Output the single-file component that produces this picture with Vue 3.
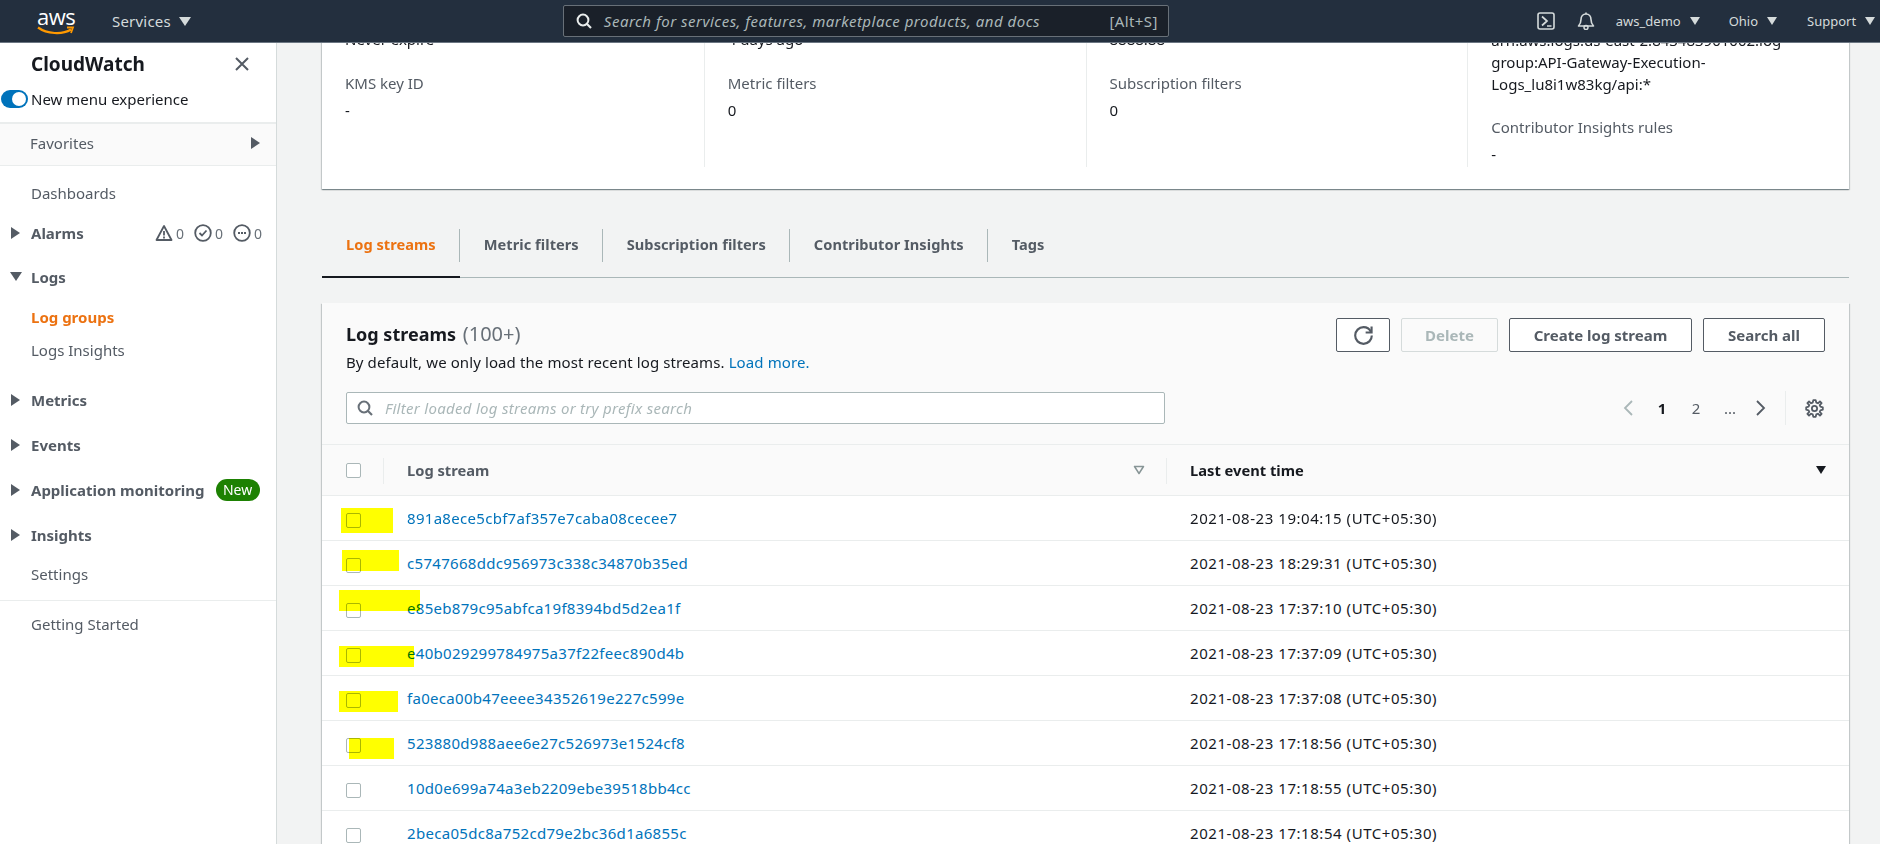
<script setup>
const navTop = ['Metrics', 'Events']

const rows = [
  { id: '891a8ece5cbf7af357e7caba08cecee7', time: '2021-08-23 19:04:15 (UTC+05:30)', mark: { left: 19, top: 12, width: 52, height: 25 } },
  { id: 'c5747668ddc956973c338c34870b35ed', time: '2021-08-23 18:29:31 (UTC+05:30)', mark: { left: 20, top: 9, width: 57, height: 21 } },
  { id: 'e85eb879c95abfca19f8394bd5d2ea1f', time: '2021-08-23 17:37:10 (UTC+05:30)', mark: { left: 17, top: 4, width: 81, height: 21 } },
  { id: 'e40b029299784975a37f22feec890d4b', time: '2021-08-23 17:37:09 (UTC+05:30)', mark: { left: 17, top: 15, width: 75, height: 21 } },
  { id: 'fa0eca00b47eeee34352619e227c599e', time: '2021-08-23 17:37:08 (UTC+05:30)', mark: { left: 17, top: 15, width: 59, height: 21 } },
  { id: '523880d988aee6e27c526973e1524cf8', time: '2021-08-23 17:18:56 (UTC+05:30)', mark: { left: 27, top: 17, width: 45, height: 21 } },
  { id: '10d0e699a74a3eb2209ebe39518bb4cc', time: '2021-08-23 17:18:55 (UTC+05:30)' },
  { id: '2beca05dc8a752cd79e2bc36d1a6855c', time: '2021-08-23 17:18:54 (UTC+05:30)' },
]

const tabs = ['Log streams', 'Metric filters', 'Subscription filters', 'Contributor Insights', 'Tags']

function markStyle(m) {
  return { left: m.left + 'px', top: m.top + 'px', width: m.width + 'px', height: m.height + 'px' }
}
</script>

<template>
  <div class="page">
    <!-- Top bar -->
    <header class="topbar">
      <div class="logo">
        <span class="logo-text">aws</span>
        <svg class="smile" viewBox="0 0 38 10" width="38" height="10">
          <path d="M1 1.5C10 8 25 9 34 3.5" fill="none" stroke="#f90" stroke-width="2.2" />
          <path d="M30 1.5h6l-2 5.5" fill="none" stroke="#f90" stroke-width="1.8" />
        </svg>
      </div>
      <span class="services">Services</span>
      <i class="tri-down nav-tri"></i>
      <div class="global-search">
        <svg viewBox="0 0 16 16" width="16" height="16" class="g-icon">
          <circle cx="7" cy="7" r="5.4" fill="none" stroke="#eaeded" stroke-width="2" />
          <path d="M11 11l4 4" stroke="#eaeded" stroke-width="2.2" />
        </svg>
        <span class="g-ph">Search for services, features, marketplace products, and docs</span>
        <span class="g-key">[Alt+S]</span>
      </div>
      <div class="top-right">
        <svg viewBox="0 0 18 18" width="18" height="18">
          <rect x="1" y="1" width="16" height="16" rx="2" fill="none" stroke="#d5dbdb" stroke-width="1.6" />
          <path d="M5 4.5l5 4.5-5 4.5" fill="none" stroke="#d5dbdb" stroke-width="1.7" />
          <path d="M10 14h4.5" stroke="#d5dbdb" stroke-width="1.5" />
        </svg>
        <svg class="bell" viewBox="0 0 18 18" width="18" height="18">
          <path d="M1.5 14h15c-2-2-2.500-3-2.500-6.500C14 4 12 2 9 2S4 4 4 7.500C4 11 3.500 12 1.500 14z" fill="none" stroke="#d5dbdb" stroke-width="1.6" stroke-linejoin="round" />
          <path d="M9 .5V2" stroke="#d5dbdb" stroke-width="1.6" />
          <circle cx="9" cy="15.500" r="2" fill="none" stroke="#d5dbdb" stroke-width="1.500" />
        </svg>
        <span class="tr-item acct">aws_demo</span><i class="tri-down nav-tri t1"></i>
        <span class="tr-item ohio">Ohio</span><i class="tri-down nav-tri t1"></i>
        <span class="tr-item supp">Support</span><i class="tri-down nav-tri t1"></i>
      </div>
    </header>

    <div class="body">
      <!-- Side navigation -->
      <aside class="sidenav">
        <div class="nav-head">
          <h2>CloudWatch</h2>
          <svg viewBox="0 0 16 16" width="16" height="16" class="close">
            <path d="M2 2l12 12M14 2L2 14" stroke="#545b64" stroke-width="2" />
          </svg>
        </div>
        <div class="toggle-row">
          <span class="toggle"><span class="knob"></span></span>
          <span>New menu experience</span>
        </div>
        <div class="favorites">
          <span>Favorites</span>
          <i class="tri-right"></i>
        </div>

        <a class="nav-link dash">Dashboards</a>
        <div class="nav-sec alarms">
          <i class="tri-right"></i>
          <b>Alarms</b>
          <div class="alarm-icons">
            <svg viewBox="0 0 18 18" width="18" height="18">
              <path d="M9 2L1.500 16h15z" fill="none" stroke="#545b64" stroke-width="1.800" stroke-linejoin="round" />
              <path d="M9 7v4.500M9 12.500v2" stroke="#545b64" stroke-width="1.800" />
            </svg>
            <span>0</span>
            <svg viewBox="0 0 18 18" width="18" height="18">
              <circle cx="9" cy="9" r="7.800" fill="none" stroke="#545b64" stroke-width="1.800" />
              <path d="M5.500 9l2.500 2.500 4.500-5" fill="none" stroke="#545b64" stroke-width="1.800" />
            </svg>
            <span>0</span>
            <svg viewBox="0 0 18 18" width="18" height="18">
              <circle cx="9" cy="9" r="7.800" fill="none" stroke="#545b64" stroke-width="1.800" />
              <path d="M5 9h2M8 9h2M11 9h2" stroke="#545b64" stroke-width="2" />
            </svg>
            <span>0</span>
          </div>
        </div>
        <div class="nav-sec">
          <i class="tri-down"></i>
          <b>Logs</b>
        </div>
        <a class="nav-sub active">Log groups</a>
        <a class="nav-sub">Logs Insights</a>
        <div v-for="(n, i) in navTop" :key="n" class="nav-sec" :class="{ gap: i === 0 }">
          <i class="tri-right"></i>
          <b>{{ n }}</b>
        </div>
        <div class="nav-sec">
          <i class="tri-right"></i>
          <b>Application monitoring</b>
          <span class="badge">New</span>
        </div>
        <div class="nav-sec">
          <i class="tri-right"></i>
          <b>Insights</b>
        </div>
        <a class="nav-link settings">Settings</a>
        <hr />
        <a class="nav-link started">Getting Started</a>
      </aside>

      <!-- Page content, scrolled down a little -->
      <main class="content">
        <section class="summary">
          <div class="col">
            <p class="val">Never expire</p>
            <p class="lbl">KMS key ID</p>
            <p class="val">-</p>
          </div>
          <div class="col">
            <p class="val">4 days ago</p>
            <p class="lbl">Metric filters</p>
            <p class="val">0</p>
          </div>
          <div class="col">
            <p class="val">8888.88</p>
            <p class="lbl">Subscription filters</p>
            <p class="val">0</p>
          </div>
          <div class="col arn">
            <p class="val">arn:aws:logs:us-east-2:843483901002:log-<br />group:API-Gateway-Execution-<br />Logs_lu8i1w83kg/api:*</p>
            <p class="lbl lbl-2">Contributor Insights rules</p>
            <p class="val">-</p>
          </div>
        </section>

        <nav class="tabs">
          <a v-for="(t, i) in tabs" :key="t" class="tab" :class="{ on: i === 0 }"><span>{{ t }}</span></a>
        </nav>

        <section class="table-card">
          <div class="tc-head">
            <div class="tc-top">
              <div>
                <h3>Log streams <span class="count">(100+)</span></h3>
                <p class="desc">By default, we only load the most recent log streams. <a>Load more.</a></p>
              </div>
              <div class="actions">
                <button class="btn icon-btn">
                  <svg viewBox="0 0 16 16" width="19" height="19">
                    <path d="M15 8a7 7 0 0 1-7 7 7 7 0 0 1-7-7 7 7 0 0 1 7-7c2.800 0 5.100 1.600 6.300 4" fill="none" stroke="#545b64" stroke-width="1.800" />
                    <path d="M14.800 .5v5h-5" fill="none" stroke="#545b64" stroke-width="1.800" />
                  </svg>
                </button>
                <button class="btn disabled">Delete</button>
                <button class="btn create">Create log stream</button>
                <button class="btn">Search all</button>
              </div>
            </div>
            <div class="tc-tools">
              <div class="filter">
                <svg viewBox="0 0 16 16" width="16" height="16">
                  <circle cx="7" cy="7" r="5.400" fill="none" stroke="#687078" stroke-width="2" />
                  <path d="M11 11l4 4" stroke="#687078" stroke-width="2.200" />
                </svg>
                <span>Filter loaded log streams or try prefix search</span>
              </div>
              <div class="pager">
                <svg viewBox="0 0 12 18" width="12" height="18">
                  <path d="M10 2L3 9l7 7" fill="none" stroke="#aab7b8" stroke-width="1.800" />
                </svg>
                <b class="pg cur">1</b>
                <span class="pg">2</span>
                <span class="pg dots">...</span>
                <svg viewBox="0 0 12 18" width="12" height="18">
                  <path d="M2 2l7 7-7 7" fill="none" stroke="#545b64" stroke-width="1.800" />
                </svg>
                <span class="pg-sep"></span>
                <svg viewBox="0 0 16 16" width="19" height="19">
                  <path d="M7 1H9L9.500 3L10.900 3.600L12.600 2L14 3.400L12.400 5.100L13 6.500L15 7V9L13 9.500L12.400 10.900L14 12.600L12.600 14L10.900 12.400L9.500 13L9 15H7L6.500 13L5.100 12.400L3.400 14L2 12.600L3.600 10.900L3 9.500L1 9V7L3 6.500L3.600 5.100L2 3.400L3.400 2L5.100 3.600L6.500 3Z" fill="none" stroke="#545b64" stroke-width="1.500" stroke-linejoin="round" />
                  <circle cx="8" cy="8" r="2.200" fill="none" stroke="#545b64" stroke-width="1.500" />
                </svg>
              </div>
            </div>
          </div>

          <div class="thead">
            <div class="c-check"><span class="box"></span><span class="th-sep"></span></div>
            <div class="c-name th">
              Log stream
              <svg viewBox="0 0 12 10" width="12" height="10" class="sort">
                <path d="M1.500 1.500h9L6 8.500z" fill="none" stroke="#879596" stroke-width="1.500" stroke-linejoin="round" />
              </svg>
            </div>
            <div class="c-time th">
              Last event time
              <i class="tri-down sort-on"></i>
            </div>
          </div>

          <div v-for="r in rows" :key="r.id" class="row">
            <div class="c-check"><span class="box"></span></div>
            <div class="c-name"><a>{{ r.id }}</a></div>
            <div class="c-time">{{ r.time }}</div>
            <span v-if="r.mark" class="mark" :style="markStyle(r.mark)"></span>
          </div>
        </section>
      </main>
    </div>
  </div>
</template>

<style>
html, body {
  margin: 0;
  overflow: hidden;
}
</style>

<style scoped>
* {
  box-sizing: border-box;
}

.page {
  width: 1880px;
  height: 844px;
  overflow: hidden;
  font-family: "Noto Sans", "Open Sans", sans-serif;
  font-size: 15px;
  color: #16191f;
  background: #f2f3f3;
  display: flex;
  flex-direction: column;
}

/* triangles */
.tri-down {
  display: inline-block;
  width: 0;
  height: 0;
  border-left: 6px solid transparent;
  border-right: 6px solid transparent;
  border-top: 9px solid #545b64;
}
.tri-right {
  display: inline-block;
  width: 0;
  height: 0;
  border-top: 6px solid transparent;
  border-bottom: 6px solid transparent;
  border-left: 9px solid #545b64;
}

/* top bar */
.topbar {
  height: 43px;
  flex: none;
  background: #232f3e;
  border-bottom: 1px solid #6b7682;
  display: flex;
  align-items: center;
  color: #d5dbdb;
  position: relative;
  z-index: 2;
}
.logo {
  margin-left: 37px;
  width: 38px;
  height: 30px;
  flex: none;
  position: relative;
}
.logo-text {
  position: absolute;
  top: -3px;
  left: 0;
  font-family: "Open Sans", sans-serif;
  font-size: 22px;
  line-height: 26px;
  color: #fff;
  letter-spacing: -.5px;
}
.smile {
  position: absolute;
  left: 0;
  top: 20px;
}
.services {
  margin-left: 37px;
  letter-spacing: .2px;
}
.nav-tri {
  margin-left: 8px;
  border-top-color: #d5dbdb;
}
.global-search {
  margin-left: 372px;
  width: 606px;
  height: 32px;
  flex: none;
  background: #1a2029;
  border: 1px solid #687078;
  border-radius: 2px;
  display: flex;
  align-items: center;
  padding: 0 10px 0 12px;
}
.g-ph {
  margin-left: 12px;
  font-style: italic;
  color: #aab7b8;
  flex: 1;
  letter-spacing: .5px;
}
.g-key {
  color: #aab7b8;
  letter-spacing: .4px;
}
.top-right {
  margin-left: 368px;
  flex: none;
  display: flex;
  align-items: center;
}
.bell {
  margin-left: 22px;
}
.tr-item {
  font-size: 13px;
}
.acct {
  margin-left: 21px;
}
.ohio {
  margin-left: 29px;
}
.supp {
  margin-left: 30px;
}
.t1 {
  margin-left: 9px;
  border-left-width: 5px;
  border-right-width: 5px;
  border-top-width: 8px;
}

.body {
  flex: 1;
  display: flex;
  min-height: 0;
}

/* side navigation */
.sidenav {
  width: 277px;
  flex: none;
  background: #fff;
  border-right: 1px solid #d5dbdb;
  color: #545b64;
}
.nav-head {
  height: 38px;
  padding: 4px 26px 0 31px;
  display: flex;
  align-items: center;
  justify-content: space-between;
}
.nav-head h2 {
  margin: 0;
  font-size: 19px;
  font-weight: 700;
  color: #16191f;
}
.toggle-row {
  height: 41px;
  padding: 0 0 6px 1px;
  display: flex;
  align-items: center;
  gap: 3px;
  color: #16191f;
}
.toggle {
  width: 27px;
  height: 18px;
  border-radius: 9px;
  background: #0073bb;
  position: relative;
}
.knob {
  position: absolute;
  left: 11px;
  top: 2px;
  width: 14px;
  height: 14px;
  border-radius: 50%;
  background: #fff;
}
.favorites {
  height: 44px;
  background: #fafafa;
  border-top: 2px solid #eaeded;
  border-bottom: 1px solid #eaeded;
  padding: 0 16px 4px 30px;
  display: flex;
  align-items: center;
  justify-content: space-between;
}
.nav-link,
.nav-sub {
  display: flex;
  align-items: center;
  padding-left: 31px;
}
.dash {
  height: 36px;
  margin-top: 9px;
}
.nav-sec {
  height: 45px;
  display: flex;
  align-items: center;
  padding-left: 11px;
}
.nav-sec b {
  margin-left: 11px;
  font-weight: 700;
}
.nav-sec .tri-down {
  margin-left: -1px;
  margin-right: -2px;
}
.alarms {
  height: 43px;
}
.alarm-icons {
  margin-left: auto;
  margin-right: 14px;
  display: flex;
  align-items: center;
  color: #687078;
}
.alarm-icons span {
  margin: 2px 10px 0 3px;
  font-size: 14px;
}
.alarm-icons span:last-child {
  margin-right: 0;
}
.nav-sub {
  height: 33px;
}
.nav-sec + .nav-sub {
  margin-top: 1px;
}
.active {
  color: #ec7211;
  font-weight: 700;
}
.gap {
  margin-top: 11px;
}
.badge {
  margin-left: 11px;
  width: 44px;
  height: 22px;
  border-radius: 11px;
  background: #1d8102;
  color: #fff;
  font-size: 14px;
  display: flex;
  align-items: center;
  justify-content: center;
}
.settings {
  height: 34px;
}
hr {
  margin: 9px 0 0;
  border: 0;
  border-top: 1px solid #eaeded;
}
.started {
  height: 46px;
}

/* main content */
.content {
  flex: 1;
  min-width: 0;
  padding: 0 31px 0 45px;
}
.summary {
  margin-top: -42px;
  height: 188px;
  background: #fff;
  box-shadow: 0 1px 1px 0 rgba(0, 28, 36, .3), 1px 1px 1px 0 rgba(0, 28, 36, .15), -1px 1px 1px 0 rgba(0, 28, 36, .15);
  display: grid;
  grid-template-columns: repeat(4, 1fr);
  padding-bottom: 22px;
}
.col {
  padding: 27px 23px 0;
  border-left: 1px solid #eaeded;
}
.col:first-child {
  border-left: 0;
}
.col.arn {
  padding-top: 28px;
}
.col p {
  margin: 0;
  line-height: 22px;
}
.lbl {
  color: #545b64;
  margin-top: 22px !important;
}
.col .val + .lbl + .val {
  margin-top: 5px;
}
.col .lbl-2 + .val {
  margin-top: 9px;
}
.lbl-2 {
  margin-top: 21px !important;
}

.tabs {
  margin-top: 40px;
  height: 49px;
  display: flex;
  border-bottom: 1px solid #aab7b8;
  position: relative;
}
.tab {
  padding: 0 24px 16px;
  display: flex;
  font-size: 14.6px;
  font-weight: 700;
  letter-spacing: .05px;
  color: #545b64;
  border-bottom: 0;
  position: relative;
}
.tab span {
  line-height: 30px;
}
.tab:not(:last-child)::after {
  content: "";
  position: absolute;
  right: 0;
  top: 0;
  height: 33px;
  border-right: 1px solid #aab7b8;
}
.tab.on {
  color: #ec7211;
  border-bottom: 2px solid #16191f;
  margin-bottom: -1px;
}

.table-card {
  margin-top: 25px;
  background: #fff;
  box-shadow: 0 1px 1px 0 rgba(0, 28, 36, .3), 1px 1px 1px 0 rgba(0, 28, 36, .15), -1px 1px 1px 0 rgba(0, 28, 36, .15);
}
.tc-head {
  height: 142px;
  background: #fafafa;
  padding: 15px 24px 0;
  border-bottom: 1px solid #eaeded;
}
.tc-top {
  display: flex;
  justify-content: space-between;
}
h3 {
  margin: 3px 0 0;
  font-size: 18px;
  line-height: 26px;
  font-weight: 700;
}
.count {
  margin-left: 2px;
  font-size: 20px;
  font-weight: 400;
  color: #687078;
}
.desc {
  margin: 5px 0 0;
  line-height: 20px;
  letter-spacing: .1px;
}
.desc a {
  color: #0073bb;
}
.actions {
  display: flex;
  gap: 11px;
}
.btn {
  height: 34px;
  padding: 0 22px;
  font: inherit;
  font-weight: 700;
  color: #545b64;
  background: #fff;
  border: 1px solid #545b64;
  border-radius: 2px;
}
.icon-btn {
  width: 54px;
  padding: 0;
  display: flex;
  align-items: center;
  justify-content: center;
}
.disabled {
  width: 97px;
  padding: 0;
  color: #aab7b8;
  background: #fafafa;
  border-color: #d5dbdb;
}
.create {
  width: 183px;
  padding: 0;
}
.btn:last-child {
  width: 122px;
  padding: 0;
}
.tc-tools {
  margin-top: 19px;
  display: flex;
  align-items: center;
  justify-content: space-between;
}
.filter {
  width: 819px;
  height: 32px;
  background: #fff;
  border: 1px solid #aab7b8;
  border-radius: 2px;
  display: flex;
  align-items: center;
  padding-left: 10px;
  color: #aab7b8;
  font-style: italic;
  letter-spacing: .29px;
}
.filter span {
  margin-left: 12px;
}
.pager {
  display: flex;
  align-items: center;
  margin-right: 1px;
}
.pg {
  width: 34px;
  text-align: center;
  color: #545b64;
}
.cur {
  color: #16191f;
  margin-left: 11px;
}
.dots {
  margin-right: 8px;
}
.pg-sep {
  height: 34px;
  margin: 0 19px 0 18px;
  border-left: 1px solid #eaeded;
}

.thead,
.row {
  display: flex;
  align-items: center;
}
.thead {
  height: 51px;
  background: #fafafa;
  border-bottom: 1px solid #eaeded;
}
.c-check {
  width: 62px;
  height: 100%;
  flex: none;
  padding-left: 24px;
  display: flex;
  align-items: center;
  position: relative;
}
.box {
  width: 15px;
  height: 15px;
  background: #fff;
  border: 1px solid #aab7b8;
  border-radius: 2px;
}
.th-sep {
  position: absolute;
  right: 0;
  top: 13px;
  height: 26px;
  border-left: 1px solid #eaeded;
}
.c-name {
  width: 783px;
  flex: none;
  padding-left: 23px;
}
.c-time {
  flex: 1;
  padding-left: 23px;
  letter-spacing: .55px;
}
.c-name a {
  letter-spacing: .3px;
}
.th {
  height: 100%;
  display: flex;
  align-items: center;
  font-size: 14.7px;
  font-weight: 700;
  letter-spacing: 0;
  color: #545b64;
  justify-content: space-between;
  position: relative;
}
.c-name.th {
  padding-right: 22px;
}
.c-name.th::after {
  content: "";
  position: absolute;
  right: 0;
  top: 13px;
  height: 26px;
  border-left: 1px solid #eaeded;
}
.c-time.th {
  color: #16191f;
  padding-right: 23px;
}
.sort-on {
  border-top-color: #16191f;
  border-left-width: 5px;
  border-right-width: 5px;
  border-top-width: 8px;
}
.row {
  height: 45px;
  background: #fff;
  border-bottom: 1px solid #eaeded;
  position: relative;
}
.row .c-check {
  padding-top: 5px;
}
.row a {
  color: #0073bb;
}
.mark {
  position: absolute;
  background: #ff0;
  mix-blend-mode: multiply;
}
</style>
